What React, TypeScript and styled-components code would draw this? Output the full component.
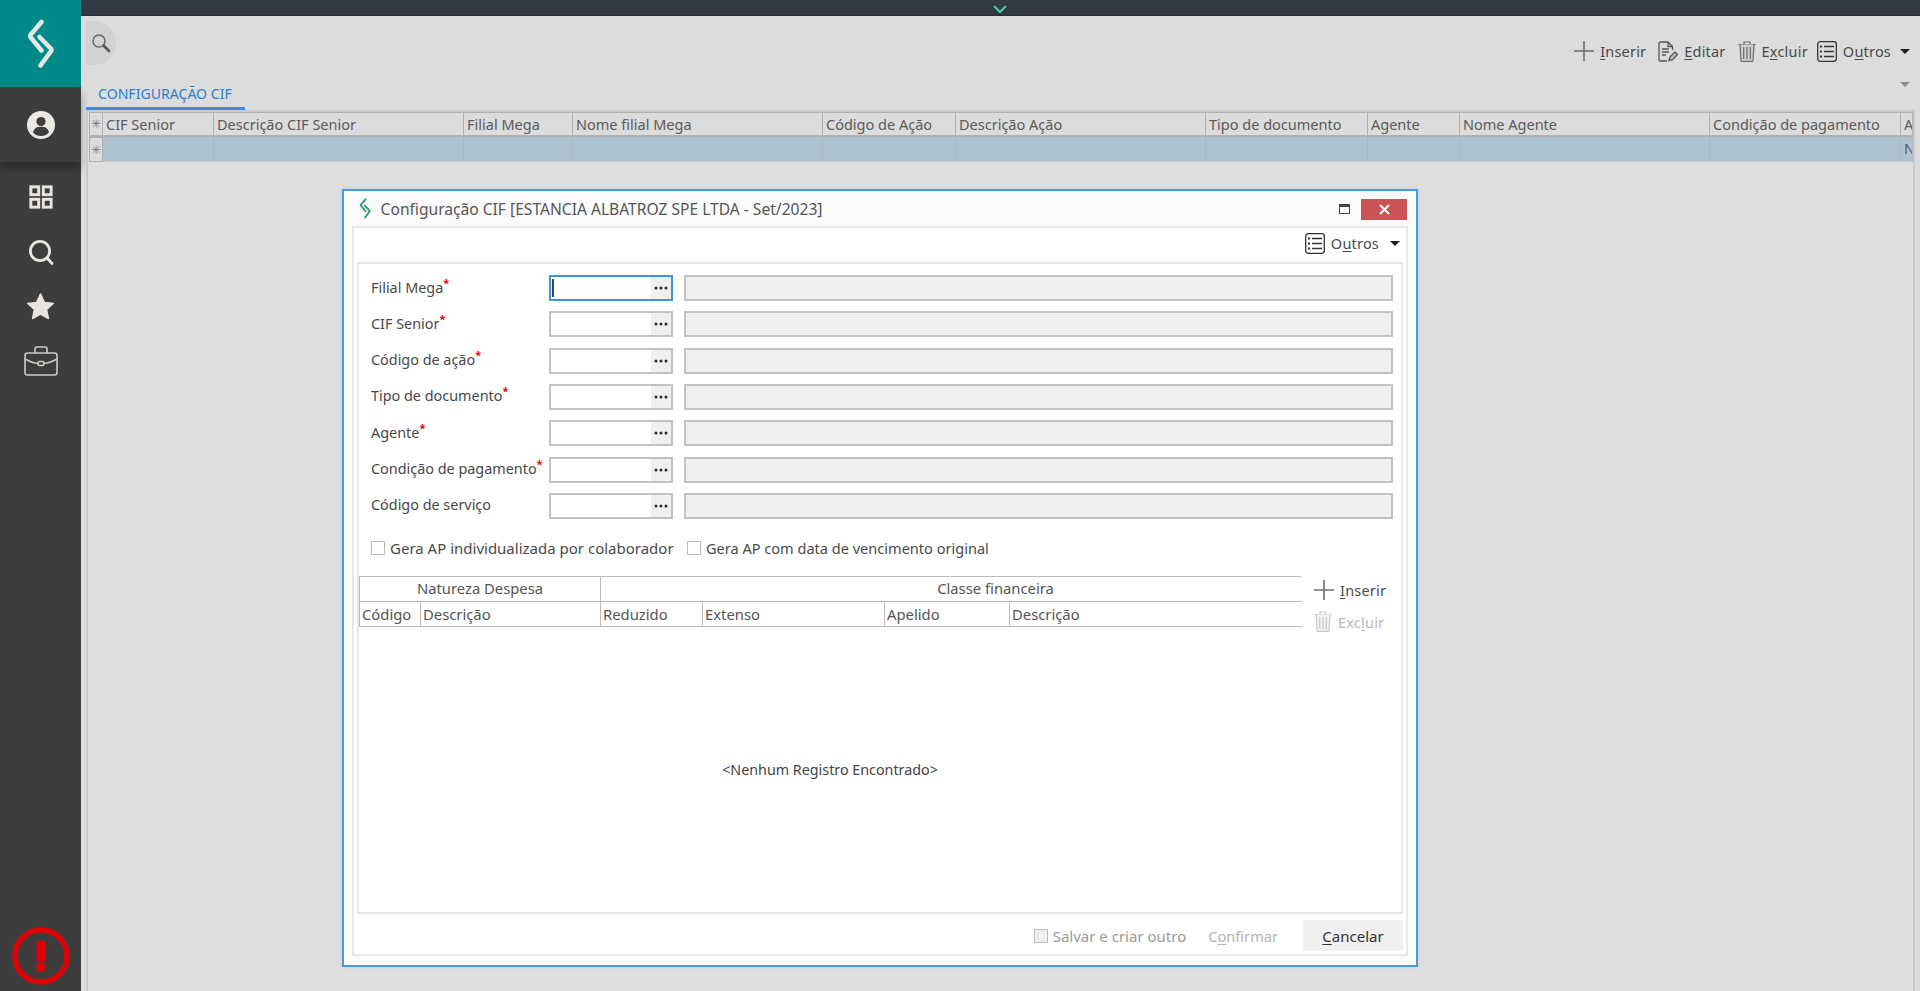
import React from "react";
import styled, { createGlobalStyle } from "styled-components";

const Global = createGlobalStyle`
  html, body { margin: 0; padding: 0; height: 100%; overflow: hidden; background: #dcdcdc; }
  body { font-family: "Noto Sans", "Open Sans", sans-serif; font-size: 14.5px; color: #444; }
  * { box-sizing: border-box; }
`;

const Shell = styled.div`position: relative; display: flex; width: 1920px; height: 991px; overflow: hidden;`;
const Sidebar = styled.aside`width: 81px; flex: none; background: #3d3d3d; display: flex; flex-direction: column; align-items: center;`;
const LogoBlock = styled.div`width: 100%; height: 87px; background: #008b8a; display: flex; align-items: center; justify-content: center;`;
const ProfileBlock = styled.div`width: 100%; height: 75px; display: flex; align-items: center; justify-content: center; box-shadow: 0 6px 8px rgba(0,0,0,.3);`;
const Nav = styled.nav`display: flex; flex-direction: column; align-items: center; margin-top: 8px; width: 100%;`;
const NavItem = styled.div`height: 54.7px; display: flex; align-items: center; justify-content: center; color: #e8e5e1;`;
const Alert = styled.div`margin-top: auto; margin-bottom: 5px; height: 60px; display: flex; align-items: center;`;

const Main = styled.main`flex: 1; min-width: 0; display: flex; flex-direction: column;`;
const TopBar = styled.div`height: 16px; background: #323844; display: flex; justify-content: center; padding-right: 2px; flex: none; border-bottom: 1px solid #2a2f3a;`;
const Toolbar = styled.div`height: 60px; flex: none; display: flex; justify-content: space-between; padding: 5px 10px 0 5px;`;
const SearchBubble = styled.div`width: 30px; height: 44px; background: #d2d2d2; border-radius: 0 22px 22px 0; display: flex; align-items: center; justify-content: center;`;
const Actions = styled.div`display: flex; align-items: center; height: 50px; margin-top: 5px;`;
const ActionBtn = styled.div<{ $off?: boolean; $gap?: number }>`
  display: flex; align-items: center; gap: 6px; margin-left: ${p => p.$gap ?? 12}px;
  color: ${p => (p.$off ? "#b9b9b9" : "#4a4a4a")}; font-size: 14.5px; letter-spacing: .2px; white-space: nowrap;
`;
const Accel = styled.span`text-decoration: underline; text-underline-offset: 2px;`;
const Caret = styled.span<{ $gray?: boolean }>`
  display: inline-block; width: 0; height: 0; border-left: 5px solid transparent; border-right: 5px solid transparent;
  border-top: 5px solid ${p => (p.$gray ? "#8a8a8a" : "#1e1e1e")};
`;
const TabRow = styled.div`height: 34px; flex: none; display: flex; justify-content: space-between; padding: 0 10px 0 5px; position: relative;`;
const Tab = styled.div`width: 159px; height: 34px; padding: 9px 0 0 12px; color: #2c7fd0; font-size: 14.1px; line-height: 17px; border-bottom: 3px solid #3a8ede; position: relative; z-index: 1; white-space: nowrap;`;
const TabCaret = styled.div`padding: 5px 0 0; line-height: 0;`;
const Frame = styled.div`flex: 1; margin: 0 5px 0 5px; border: 2px solid #c9c9c9; border-bottom: 0; padding: 0 0 0 1px; background: #dedede; overflow: hidden;`;

const GridRow = styled.div<{ $head?: boolean }>`
  display: grid; grid-template-columns: 14px 111px 250px 109px 250px 133px 250px 162px 92px 250px 191px 12px;
  height: 25px; background: ${p => (p.$head ? "#dcdcdc" : "#aec3d2")}; font-size: 14.5px; line-height: 22px; color: #5a5a5a;
`;
const HeadCell = styled.div`border: 1px solid #b0b0b0; border-bottom-width: 2px; border-left-width: 0; padding-left: 3px; overflow: hidden; white-space: nowrap;`;
const DataCell = styled.div`border-right: 1px solid #a9b9c4; border-bottom: 1px solid #c4ccd2; padding-left: 3px; overflow: hidden; white-space: nowrap;`;
const MarkerCell = styled.div<{ $head?: boolean }>`
  background: #dcdcdc; border: 1px solid #b0b0b0; ${p => (p.$head ? "border-bottom-width: 2px;" : "")}
  display: flex; align-items: center; justify-content: center; color: #7a7a7a; font-family: "DejaVu Sans", sans-serif; font-size: 12px; line-height: 1; overflow: hidden;
`;

const Dialog = styled.section`
  position: absolute; left: 342px; top: 189px; width: 1076px; height: 778px; background: #fbfbfb;
  border: 2px solid #4a9bda; display: flex; flex-direction: column; box-shadow: 0 0 4px rgba(0,0,0,.08);
`;
const TitleBar = styled.header`height: 35px; flex: none; display: flex; align-items: center; padding: 0 9px 0 15px;`;
const TitleText = styled.h1`margin: 0 0 0 9px; font-weight: 400; font-size: 15.6px; color: #555; white-space: nowrap; flex: 1;`;
const WinMin = styled.div`width: 11px; height: 10px; border: 1.5px solid #444; border-top-width: 3px; margin-right: 11px; margin-top: 1px;`;
const WinClose = styled.div`width: 46px; height: 21px; background: #c95355; display: flex; align-items: center; justify-content: center; margin-top: 1px;`;
const Body = styled.div`flex: 1; margin: 0 8px 9px; border: 2px solid #e8e8e8; background: #fff; display: flex; flex-direction: column; min-height: 0;`;
const BodyActions = styled.div`height: 34px; flex: none; display: flex; align-items: center; justify-content: flex-end; padding: 0 6px 4px 0;`;
const FormBox = styled.div`flex: 1; margin: 0 3px; border: 2px solid #e6e6e6; display: flex; flex-direction: column; min-height: 0;`;
const Rows = styled.div`display: flex; flex-direction: column; gap: 10.33px; padding: 11px 0 0 12px;`;
const FormRow = styled.div`display: grid; grid-template-columns: 178px 124px 709px; column-gap: 0; height: 26px; align-items: center;`;
const Label = styled.label`color: #484848; font-size: 14.4px; white-space: nowrap; position: relative; top: -1px;`;
const Req = styled.sup`color: #ef0000; font-size: 11px; font-weight: 700; line-height: 0; margin-left: 0; vertical-align: 6px;`;
const LookupInput = styled.div<{ $focus?: boolean }>`
  height: 26px; border: 2px solid ${p => (p.$focus ? "#3f94e0" : "#c2c2c2")}; background: #fff;
  display: flex; justify-content: space-between; align-items: stretch; position: relative;
`;
const TextCaret = styled.span`width: 2px; height: 18px; background: #444; margin: 2px 0 0 1px;`;
const Ellipsis = styled.span`width: 20px; margin-left: auto; background: #efefef; display: flex; align-items: center; justify-content: center;`;
const ReadOnly = styled.div`height: 26px; margin-left: 11px; width: 709px; background: #efefef; border: 2px solid #c2c2c2;`;
const Checks = styled.div`display: flex; align-items: center; height: 14px; margin: 22px 0 0 12px;`;
const Check = styled.label<{ $off?: boolean; $width?: number; $size?: number }>`
  display: flex; align-items: center; gap: 5px; white-space: nowrap; font-size: ${p => p.$size ?? 15}px;
  color: ${p => (p.$off ? "#9a9a9a" : "#4a4a4a")}; ${p => (p.$width ? `width: ${p.$width}px;` : "")}
`;
const Box = styled.span<{ $off?: boolean }>`
  width: 14px; height: 14px; flex: none; border: 1.5px solid #bdbdbd; background: ${p => (p.$off ? "#eee" : "#fff")};
`;
const TableArea = styled.div`flex: 1; display: flex; margin: 21px 0 0 0; min-height: 0;`;
const TableCol = styled.div`width: 942px; flex: none; display: flex; flex-direction: column;`;
const TableHead = styled.div`display: grid; grid-template-columns: 61px 180px 102px 182px 125px 292px; grid-auto-rows: 25px; border-top: 1.5px solid #bbb; border-left: 1.5px solid #bbb; font-size: 14.8px; color: #555;`;
const GroupCell = styled.div<{ $span: number; $shift?: number }>`
  grid-column: span ${p => p.$span}; text-align: center; line-height: 23px; border-right: 1.5px solid #bbb; border-bottom: 1.5px solid #bbb;
  padding-left: ${p => p.$shift ?? 0}px;
  &:nth-child(2) { border-right: 0; }
`;
const ColCell = styled.div<{ $last?: boolean }>`
  padding-left: 2px; line-height: 24px; border-bottom: 1.5px solid #bbb; ${p => (p.$last ? "" : "border-right: 1px solid #bbb;")} white-space: nowrap;
`;
const Empty = styled.div`flex: 1; display: flex; align-items: center; justify-content: center; color: #444; font-size: 14.3px;`;
const SideActions = styled.div`margin-left: 13px; display: flex; flex-direction: column; gap: 4px;`;
const SideBtn = styled(ActionBtn)`height: 28px; margin-left: 0;`;
const Footer = styled.footer`height: 40px; flex: none; display: flex; align-items: center; justify-content: flex-end; padding: 3px 3px 0 0;`;
const FooterText = styled.span<{ $off?: boolean }>`color: ${p => (p.$off ? "#b4b4b4" : "#333")}; font-size: 14.6px;`;
const Confirm = styled(FooterText)`margin: 0 25px 0 22px;`;
const Cancel = styled.div`width: 100px; height: 31px; background: #f0f0f0; display: flex; align-items: center; justify-content: center; color: #333; font-size: 15px;`;

const Logo = ({ size = 1, color = "#e2e8e6" }: { size?: number; color?: string }) => (
  <svg width={30 * size} height={50 * size} viewBox="0 0 30 50" fill="none" stroke={color} strokeWidth="4.6" strokeLinecap="round" strokeLinejoin="round">
    <path d="M15.5 3 L4.8 15.5 Q3.6 17 4.8 18.5 L15.5 31.5" />
    <path d="M13.5 18 L24.8 29.5 Q26 31 24.8 32.5 L14.5 46.5" />
  </svg>
);

const ProfileIcon = () => (
  <svg width="28" height="28" viewBox="0 0 28 28">
    <circle cx="14" cy="14" r="14" fill="#ece9e5" />
    <circle cx="14" cy="10.5" r="4.6" fill="#3d3d3d" />
    <path d="M6 21.5 C7 17 10 15.8 14 15.8 C18 15.8 21 17 22 21.5 C20 24 17 25 14 25 C11 25 8 24 6 21.5 Z" fill="#3d3d3d" />
  </svg>
);
const GridIcon = () => (
  <svg width="24" height="24" viewBox="0 0 26 26" fill="none" stroke="currentColor" strokeWidth="3.2">
    <rect x="2" y="2" width="8.5" height="8.5" /><rect x="15.5" y="2" width="8.5" height="8.5" />
    <rect x="2" y="15.5" width="8.5" height="8.5" /><rect x="15.5" y="15.5" width="8.5" height="8.5" />
  </svg>
);
const SearchIcon = () => (
  <svg width="26" height="26" viewBox="0 0 26 26" fill="none" stroke="currentColor" strokeWidth="2.8">
    <circle cx="12" cy="12" r="9.6" /><path d="M19 19 L24 24.5" strokeLinecap="round" />
  </svg>
);
const StarIcon = () => (
  <svg width="31" height="31" viewBox="0 0 24 24" fill="currentColor" stroke="currentColor" strokeWidth="1" strokeLinejoin="round">
    <path d="M12 2.2 L15 8.8 L22 9.6 L16.8 14.4 L18.2 21.4 L12 17.9 L5.8 21.4 L7.2 14.4 L2 9.6 L9 8.8 Z" />
  </svg>
);
const CaseIcon = () => (
  <svg width="34" height="30" viewBox="0 0 34 30" fill="none" stroke="#cfcac4" strokeWidth="1.6">
    <rect x="1" y="7" width="32" height="22" rx="2.5" />
    <path d="M11 7 V3 Q11 1 13 1 H21 Q23 1 23 3 V7" />
    <path d="M1 13 Q8 17 14 17.5 M20 17.5 Q26 17 33 13" />
    <rect x="14" y="15.5" width="6" height="4" rx="1.6" />
  </svg>
);
const BigAlert = () => (
  <svg width="60" height="60" viewBox="0 0 60 60">
    <circle cx="30" cy="30" r="26" fill="none" stroke="#e00006" strokeWidth="5.5" />
    <rect x="25.5" y="15" width="9" height="20" fill="#e00006" />
    <circle cx="30" cy="41" r="5" fill="#e00006" />
  </svg>
);
const Chevron = () => (
  <svg width="14" height="9" viewBox="0 0 14 9" fill="none" stroke="#4ecdb4" strokeWidth="2" style={{ marginTop: 5 }}>
    <path d="M1 1 L7 7 L13 1" />
  </svg>
);
const Lens = () => (
  <svg width="20" height="20" viewBox="0 0 20 20" fill="none" stroke="#555" strokeWidth="1.5">
    <circle cx="8" cy="8" r="6" stroke="#666" /><path d="M12.5 12.5 L18 18" strokeWidth="2.6" strokeLinecap="round" />
  </svg>
);
const PlusIcon = ({ off }: { off?: boolean }) => (
  <svg width="20" height="20" viewBox="0 0 20 20" stroke={off ? "#bbb" : "#6e6e6e"} strokeWidth="1.6">
    <path d="M0 10 H20 M10 0 V20" />
  </svg>
);
const EditIcon = () => (
  <svg width="20" height="21" viewBox="0 0 20 21" fill="none" stroke="#555" strokeWidth="1.3">
    <path d="M9 20 H2.5 Q1 20 1 18.5 V2.5 Q1 1 2.5 1 H10 L14.5 5.5 V9" />
    <path d="M10 1 V5.5 H14.5" />
    <path d="M4 8 H11 M4 11 H11 M4 14 H8" />
    <path d="M11 19.5 L11.8 16 L17 11 L19.5 13.5 L14.5 18.6 Z" fill="#bbb" />
  </svg>
);
const TrashIcon = ({ off }: { off?: boolean }) => (
  <svg width="18" height="21" viewBox="0 0 18 21" fill="none" stroke={off ? "#c8c8c8" : "#6a6a6a"} strokeWidth="1.2">
    <path d="M0.5 3.5 H17.5 M6 3 V1 H12 V3" />
    <path d="M2 3.5 L3 19.5 Q3 20.4 4 20.4 H14 Q15 20.4 15 19.5 L16 3.5" fill={off ? "#f2f2f2" : "#cfcfcf"} />
    <path d="M5.7 6 V18 M9 6 V18 M12.3 6 V18" />
  </svg>
);
const ListIcon = () => (
  <svg width="20" height="21" viewBox="0 0 20 21" fill="none" stroke="#333" strokeWidth="1.3">
    <rect x="0.7" y="0.7" width="18.6" height="19.6" rx="2.5" />
    <path d="M7 5.5 H17 M7 10.5 H17 M7 15.5 H17" />
    <path d="M3 5.5 H5 M3 10.5 H5 M3 15.5 H5" strokeWidth="2" />
  </svg>
);
const Dots = () => (
  <svg width="14" height="4" viewBox="0 0 14 4" fill="#2a2a2a">
    <circle cx="2" cy="2" r="1.5" /><circle cx="7" cy="2" r="1.5" /><circle cx="12" cy="2" r="1.5" />
  </svg>
);
const CloseX = () => (
  <svg width="11" height="11" viewBox="0 0 11 11" stroke="#fff" strokeWidth="2"><path d="M1 1 L10 10 M10 1 L1 10" /></svg>
);

const gridCols = ["CIF Senior", "Descrição CIF Senior", "Filial Mega", "Nome filial Mega", "Código de Ação", "Descrição Ação", "Tipo de documento", "Agente", "Nome Agente", "Condição de pagamento", "A"];
const fields: [string, boolean][] = [
  ["Filial Mega", true], ["CIF Senior", true], ["Código de ação", true], ["Tipo de documento", true],
  ["Agente", true], ["Condição de pagamento", true], ["Código de serviço", false],
];
const subCols = ["Código", "Descrição", "Reduzido", "Extenso", "Apelido", "Descrição"];

export default function App() {
  return (
    <Shell>
      <Global />
      <Sidebar>
        <LogoBlock><Logo /></LogoBlock>
        <ProfileBlock><ProfileIcon /></ProfileBlock>
        <Nav>
          <NavItem><GridIcon /></NavItem>
          <NavItem><SearchIcon /></NavItem>
          <NavItem><StarIcon /></NavItem>
          <NavItem><CaseIcon /></NavItem>
        </Nav>
        <Alert><BigAlert /></Alert>
      </Sidebar>
      <Main>
        <TopBar><Chevron /></TopBar>
        <Toolbar>
          <SearchBubble><Lens /></SearchBubble>
          <Actions>
            <ActionBtn><PlusIcon /><span><Accel>I</Accel>nserir</span></ActionBtn>
            <ActionBtn><EditIcon /><span><Accel>E</Accel>ditar</span></ActionBtn>
            <ActionBtn><TrashIcon /><span>E<Accel>x</Accel>cluir</span></ActionBtn>
            <ActionBtn $gap={9}><ListIcon /><span>O<Accel>u</Accel>tros</span></ActionBtn>
            <ActionBtn $gap={9}><Caret /></ActionBtn>
          </Actions>
        </Toolbar>
        <TabRow>
          <Tab>CONFIGURAÇÃO CIF</Tab>
          <TabCaret><Caret $gray /></TabCaret>
        </TabRow>
        <Frame>
          <GridRow $head>
            <MarkerCell $head>✳</MarkerCell>
            {gridCols.map(c => <HeadCell key={c}>{c}</HeadCell>)}
          </GridRow>
          <GridRow>
            <MarkerCell>✳</MarkerCell>
            {gridCols.map(c => <DataCell key={c}>{c === "A" ? "N" : ""}</DataCell>)}
          </GridRow>
        </Frame>
      </Main>

      <Dialog>
        <TitleBar>
          <Logo size={0.42} color="#2f9a80" />
          <TitleText>Configuração CIF [ESTANCIA ALBATROZ SPE LTDA - Set/2023]</TitleText>
          <WinMin />
          <WinClose><CloseX /></WinClose>
        </TitleBar>
        <Body>
          <BodyActions>
            <ActionBtn><ListIcon /><span>O<Accel>u</Accel>tros</span></ActionBtn>
            <ActionBtn $gap={11}><Caret /></ActionBtn>
          </BodyActions>
          <FormBox>
            <Rows>
              {fields.map(([name, req], i) => (
                <FormRow key={name}>
                  <Label>{name}{req && <Req>*</Req>}</Label>
                  <LookupInput $focus={i === 0}>
                    {i === 0 && <TextCaret />}
                    <Ellipsis><Dots /></Ellipsis>
                  </LookupInput>
                  <ReadOnly />
                </FormRow>
              ))}
            </Rows>
            <Checks>
              <Check $width={316}><Box /><span>Gera AP individualizada por colaborador</span></Check>
              <Check $size={14.55}><Box /><span>Gera AP com data de vencimento original</span></Check>
            </Checks>
            <TableArea>
              <TableCol>
                <TableHead>
                  <GroupCell $span={2}>Natureza Despesa</GroupCell>
                  <GroupCell $span={4} $shift={88}>Classe financeira</GroupCell>
                  {subCols.map((c, i) => <ColCell key={i} $last={i === subCols.length - 1}>{c}</ColCell>)}
                </TableHead>
                <Empty>&lt;Nenhum Registro Encontrado&gt;</Empty>
              </TableCol>
              <SideActions>
                <SideBtn><PlusIcon /><span><Accel>I</Accel>nserir</span></SideBtn>
                <SideBtn $off><TrashIcon off /><span>Exc<Accel>l</Accel>uir</span></SideBtn>
              </SideActions>
            </TableArea>
          </FormBox>
          <Footer>
            <Check $off><Box $off /><span>Salvar e criar outro</span></Check>
            <Confirm $off>C<Accel>o</Accel>nfirmar</Confirm>
            <Cancel><span><Accel>C</Accel>ancelar</span></Cancel>
          </Footer>
        </Body>
      </Dialog>
    </Shell>
  );
}
